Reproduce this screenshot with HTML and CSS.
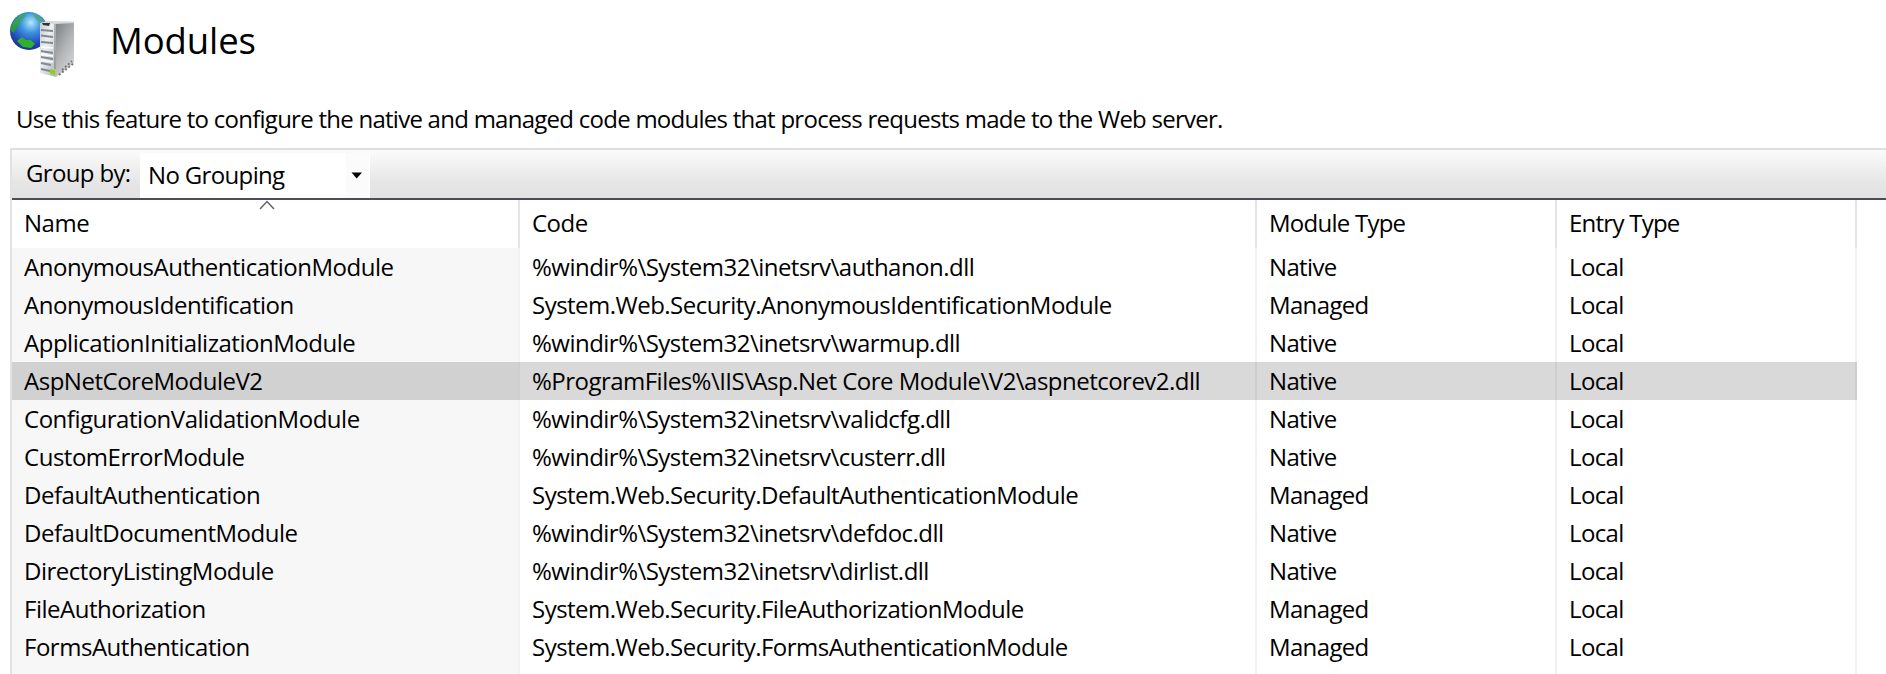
FILE: index.html
```html
<!DOCTYPE html>
<html lang="en">
<head>
  <meta charset="UTF-8" />
  <meta name="viewport" content="width=device-width, initial-scale=1.0" />
  <title>Modules</title>
  <link rel="stylesheet" href="styles.css">
</head>
<body>

  <header class="page-header">
    <svg class="logo" width="66" height="68" viewBox="0 0 66 68">
      <defs>
        <radialGradient id="globe" cx="0.55" cy="0.28" r="0.75">
          <stop offset="0" stop-color="#b5e8fa" />
          <stop offset="0.35" stop-color="#3d94e0" />
          <stop offset="0.75" stop-color="#2347b8" />
          <stop offset="1" stop-color="#173282" />
        </radialGradient>
        <linearGradient id="land" x1="0" y1="0" x2="0" y2="1">
          <stop offset="0" stop-color="#3fa878" />
          <stop offset="1" stop-color="#259a25" />
        </linearGradient>
        <linearGradient id="side" x1="0.2" y1="0" x2="0.8" y2="1">
          <stop offset="0" stop-color="#85888a" />
          <stop offset="0.5" stop-color="#b4b6b8" />
          <stop offset="1" stop-color="#d9dadb" />
        </linearGradient>
        <linearGradient id="front" x1="0" y1="0" x2="1" y2="1">
          <stop offset="0" stop-color="#c6cbce" />
          <stop offset="0.4" stop-color="#eef0f1" />
          <stop offset="1" stop-color="#aeb4b8" />
        </linearGradient>
      </defs>
      <circle cx="19" cy="20" r="19" fill="url(#globe)" />
      <path d="M2 13 Q8 3 17 2 L15 6 L11 9 L9 14 L6 17 L4 22 L0.5 20 Z" fill="url(#land)" />
      <path d="M7 30 L12 26 L16 29 L21 29 L25 33 L21 37 L13 36 Z" fill="#2fb12f" />
      <path d="M22 2 Q30 5 34 10 L31 12 L26 8 Z" fill="#4da882" />
      <path d="M46 11 L64 11 L64 52 L46 66 Z" fill="url(#side)" />
      <path d="M30 12 L46 11 L46 66 L30 62 Z" fill="url(#front)" />
      <path d="M30 12 L37 10 L64 10.500 L64 12 L46 13 Z" fill="#d5d8da" />
      <path d="M32 12 L40 12 L39 15 L33 14 Z" fill="#30353a" />
      <path d="M31 19 L43 20 M31 24.500 L43 26 M31 31 L43 32 M31 40 L43 42 M31 46 L43 48 M31 52 L41 54 M31 58 L40 60" stroke="#828990" stroke-width="2" />
      <path d="M31 36 L43 37 M31 43 L43 45 M31 49 L43 51" stroke="#fff" stroke-width="1.500" />
      <path d="M40 58 L45 59 L45 64 L40 63 Z" fill="#8fd01e" />
      <path d="M45 13 L45 58" stroke="#777c80" stroke-width="1" />
      <path d="M49 64 L64 52 M52 59 L62 50" stroke="#777" stroke-width="2" stroke-dasharray="2 2" />
    </svg>
    <h1>Modules</h1>
  </header>

  <p class="description">Use this feature to configure the native and managed code modules that process requests made to the Web server.</p>

  <main class="list">
    <div class="toolbar">
      <span class="group-label">Group by:</span>
      <div class="combo">
        <span class="combo-text">No Grouping</span>
        <span class="combo-button">
          <svg width="12" height="7" viewBox="0 0 12 7"><path d="M0.500 0.500 H11 L5.700 6.500 Z" /></svg>
        </span>
      </div>
    </div>

    <div class="row head">
      <span class="name">Name
        <svg class="sort" width="16" height="10" viewBox="0 0 16 10"><path d="M1 9 L8 1.500 L15 9" /></svg>
      </span>
      <span class="code">Code</span>
      <span class="type">Module Type</span>
      <span class="entry">Entry Type</span>
    </div>
    <div class="row"><span class="name">AnonymousAuthenticationModule</span><span class="code">%windir%\System32\inetsrv\authanon.dll</span><span class="type">Native</span><span class="entry">Local</span></div>
    <div class="row"><span class="name">AnonymousIdentification</span><span class="code">System.Web.Security.AnonymousIdentificationModule</span><span class="type">Managed</span><span class="entry">Local</span></div>
    <div class="row"><span class="name">ApplicationInitializationModule</span><span class="code">%windir%\System32\inetsrv\warmup.dll</span><span class="type">Native</span><span class="entry">Local</span></div>
    <div class="row selected"><span class="name">AspNetCoreModuleV2</span><span class="code">%ProgramFiles%\IIS\Asp.Net Core Module\V2\aspnetcorev2.dll</span><span class="type">Native</span><span class="entry">Local</span></div>
    <div class="row"><span class="name">ConfigurationValidationModule</span><span class="code">%windir%\System32\inetsrv\validcfg.dll</span><span class="type">Native</span><span class="entry">Local</span></div>
    <div class="row"><span class="name">CustomErrorModule</span><span class="code">%windir%\System32\inetsrv\custerr.dll</span><span class="type">Native</span><span class="entry">Local</span></div>
    <div class="row"><span class="name">DefaultAuthentication</span><span class="code">System.Web.Security.DefaultAuthenticationModule</span><span class="type">Managed</span><span class="entry">Local</span></div>
    <div class="row"><span class="name">DefaultDocumentModule</span><span class="code">%windir%\System32\inetsrv\defdoc.dll</span><span class="type">Native</span><span class="entry">Local</span></div>
    <div class="row"><span class="name">DirectoryListingModule</span><span class="code">%windir%\System32\inetsrv\dirlist.dll</span><span class="type">Native</span><span class="entry">Local</span></div>
    <div class="row"><span class="name">FileAuthorization</span><span class="code">System.Web.Security.FileAuthorizationModule</span><span class="type">Managed</span><span class="entry">Local</span></div>
    <div class="row"><span class="name">FormsAuthentication</span><span class="code">System.Web.Security.FormsAuthenticationModule</span><span class="type">Managed</span><span class="entry">Local</span></div>
    <div class="row rest"><span class="name"></span><span class="code"></span><span class="type"></span><span class="entry"></span></div>
  </main>

</body>
</html>
```
FILE: styles.css
```css
* {
  box-sizing: border-box;
}
body {
  display: flex;
  flex-direction: column;
  margin: 0;
  height: 100vh;
  overflow: hidden;
  background-color: #fff;
  color: #000;
  font-family: "Segoe UI", "Open Sans", "Noto Sans", sans-serif;
  font-size: 24px;
  letter-spacing: -0.65px;
  white-space: nowrap;
}
.page-header {
  display: flex;
  flex: none;
  align-items: center;
  height: 82px;
  padding-left: 10px;
}
.logo {
  margin-top: 8px;
}
h1 {
  margin: -2px 0 0 34px;
  font-size: 36.5px;
  font-weight: 400;
  letter-spacing: -0.1px;
}
.description {
  flex: none;
  margin: 0;
  height: 66px;
  padding: 0 0 0 16px;
  line-height: 73px;
  letter-spacing: -0.74px;
}
.list {
  display: flex;
  flex: 1;
  flex-direction: column;
  min-height: 0;
  margin-left: 10px;
  border-left: 2px solid #e2e2e2;
}
.toolbar {
  display: flex;
  flex: none;
  height: 52px;
  border-top: 2px solid #dedede;
  border-bottom: 2px solid #4d4b5d;
  background: linear-gradient(#fbfbfb, #e5e5e5 70%, #e2e2e2);
  letter-spacing: -0.65px;
}
.group-label {
  width: 128px;
  padding-left: 14px;
  line-height: 45px;
}
.combo {
  display: flex;
  width: 230px;
  margin-top: 3px;
  background-color: #fff;
  line-height: 43px;
}
.combo-text {
  flex: 1;
  padding-left: 8px;
}
.combo-button {
  display: flex;
  align-items: center;
  justify-content: center;
  width: 23px;
  margin-right: 1px;
  padding-right: 2px;
  background-color: #fbfbfb;
}
.row {
  display: grid;
  flex: none;
  grid-template-columns: 508px 737px 300px 300px;
  width: 1845px;
  height: 38.05px;
  line-height: 38px;
}
.row span {
  padding-left: 12px;
  border-right: 2px solid #f2f2f2;
}
.row .name {
  background-color: #f7f7f7;
  letter-spacing: -0.48px;
}
.row .code {
  letter-spacing: -0.52px;
}
.head {
  height: 48px;
  line-height: 45px;
}
.head span {
  border-right-color: #e5e5e9;
  letter-spacing: -0.75px;
}
.head .name {
  position: relative;
  background-color: #fff;
}
.sort {
  position: absolute;
  left: 247px;
  top: 0;
  fill: none;
  stroke: #666;
  stroke-width: 1.5;
}
.selected {
  background-color: #d9d9d9;
}
.selected span {
  border-right-color: #cecece;
}
.selected .name {
  background-color: #d1d1d1;
}
.rest {
  flex: 1;
  height: auto;
}
```
